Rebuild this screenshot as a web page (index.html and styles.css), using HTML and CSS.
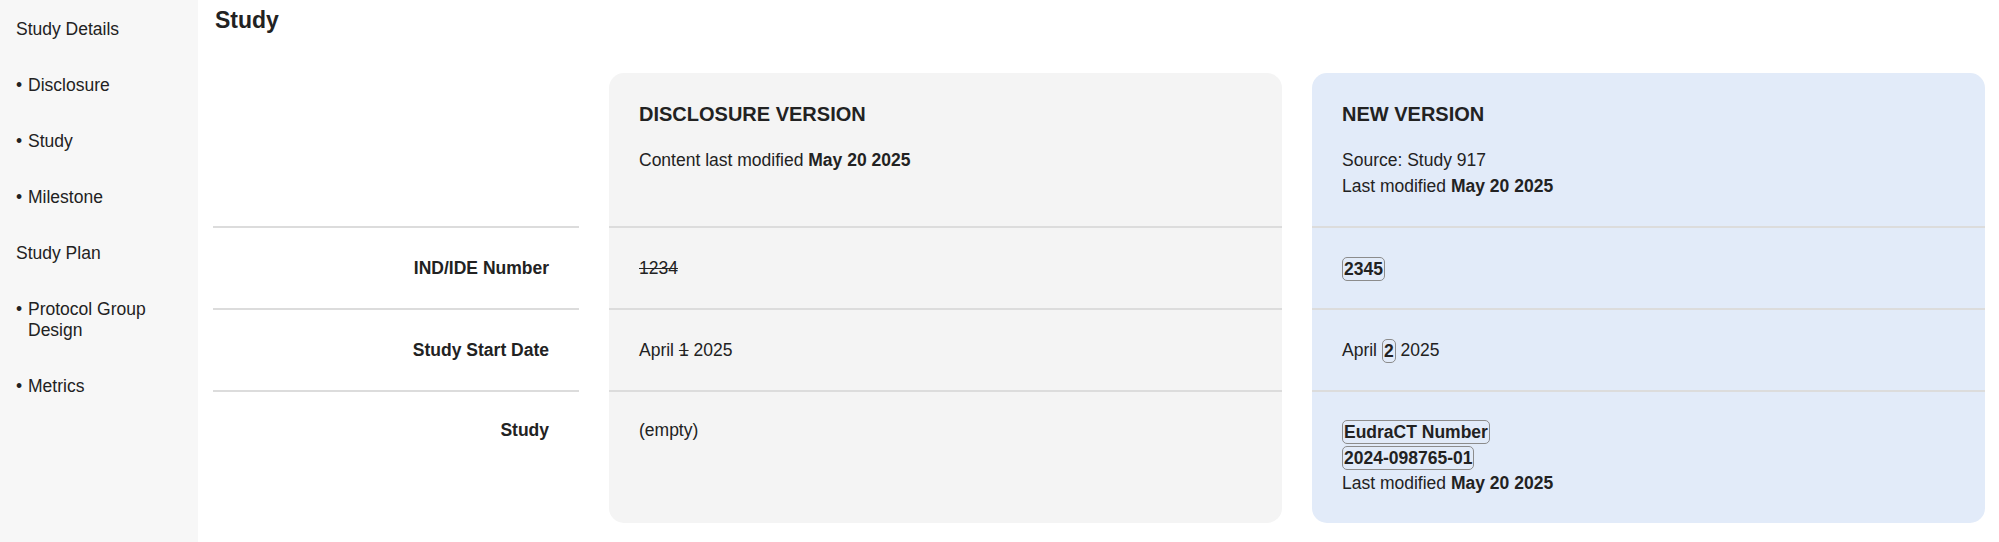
FILE: index.html
```html
<!DOCTYPE html>
<html lang="en">
<head>
    <meta charset="UTF-8">
    <meta name="viewport" content="width=device-width, initial-scale=1.0">
    <title>Study | Compare Versions</title>
    <link rel="stylesheet" href="styles.css">
</head>
<body>
    <aside class="sidebar">
        <ul class="nav-list">
            <li class="nav-item">Study Details</li>
            <li class="nav-item sub"><span class="dot">•</span><span>Disclosure</span></li>
            <li class="nav-item sub"><span class="dot">•</span><span>Study</span></li>
            <li class="nav-item sub"><span class="dot">•</span><span>Milestone</span></li>
            <li class="nav-item">Study Plan</li>
            <li class="nav-item sub"><span class="dot">•</span><span>Protocol Group Design</span></li>
            <li class="nav-item sub"><span class="dot">•</span><span>Metrics</span></li>
        </ul>
    </aside>

    <main class="content">
        <h1 class="page-title">Study</h1>

        <div class="compare">
            <!-- header row -->
            <div class="cell label head"></div>
            <div class="cell old head top">
                <h2 class="version-title">DISCLOSURE VERSION</h2>
                <p>Content last modified <b>May 20 2025</b></p>
            </div>
            <div class="cell new head top">
                <h2 class="version-title">NEW VERSION</h2>
                <p>Source: Study 917</p>
                <p>Last modified <b>May 20 2025</b></p>
            </div>

            <!-- IND/IDE -->
            <div class="cell label row">IND/IDE Number</div>
            <div class="cell old row"><s>1234</s></div>
            <div class="cell new row"><span class="badge">2345</span></div>

            <!-- start date -->
            <div class="cell label row">Study Start Date</div>
            <div class="cell old row">April <s>1</s> 2025</div>
            <div class="cell new row">April <span class="badge">2</span> 2025</div>

            <!-- study -->
            <div class="cell label row last">Study</div>
            <div class="cell old row last bottom">(empty)</div>
            <div class="cell new row last bottom">
                <div><span class="badge">EudraCT Number</span></div>
                <div><span class="badge">2024-098765-01</span></div>
                <div>Last modified <b>May 20 2025</b></div>
            </div>
        </div>
    </main>
</body>
</html>
```

FILE: styles.css
```css
body {
    font-family: "Liberation Sans", Arial, Helvetica, sans-serif;
    font-size: 17.5px;
    color: #222;
    background-color: #fff;
    margin: 0;
    padding: 0;
    display: flex;
    min-height: 100vh;
}

/* sidebar */
.sidebar {
    width: 198px;
    flex-shrink: 0;
    background-color: #f7f7f7;
}
.nav-list {
    list-style: none;
    margin: 0;
    padding: 19px 10px 0 16px;
}
.nav-item {
    line-height: 21px;
    margin-bottom: 35px;
}
.nav-item.sub {
    display: flex;
}
.nav-item .dot {
    width: 12px;
    flex-shrink: 0;
}

/* main */
.content {
    flex: 1;
    padding: 0 14px 0 15px;
}
.page-title {
    font-size: 23px;
    line-height: 26px;
    margin: 7px 0 0 2px;
}

.compare {
    display: grid;
    grid-template-columns: 366px 1fr 1fr;
    column-gap: 30px;
    margin-top: 40px;
}
.cell {
    padding: 0 30px;
    line-height: 26px;
}
.cell p {
    margin: 0;
}
.cell.old {
    background-color: #f4f4f4;
}
.cell.new {
    background-color: #e2ebf9;
}
.cell.head {
    padding-top: 29px;
    padding-bottom: 27px;
}
.cell.top {
    border-radius: 15px 15px 0 0;
}
.cell.bottom {
    border-radius: 0 0 15px 15px;
}
.cell.row {
    border-top: 2px solid #dcdcdc;
    padding-top: 27px;
    padding-bottom: 26.5px;
}
.cell.row.last {
    padding-top: 25.5px;
    padding-bottom: 26.5px;
}
.cell.label {
    text-align: right;
    font-weight: bold;
}

.version-title {
    font-size: 20px;
    line-height: 24px;
    margin: 0 0 21px 0;
}

.badge {
    display: inline-block;
    font-weight: bold;
    line-height: 22px;
    padding: 0 1px;
    border: 1px solid #8c8c8c;
    border-radius: 5px;
    vertical-align: middle;
}
.cell.new > div {
    line-height: 26.5px;
}
```
